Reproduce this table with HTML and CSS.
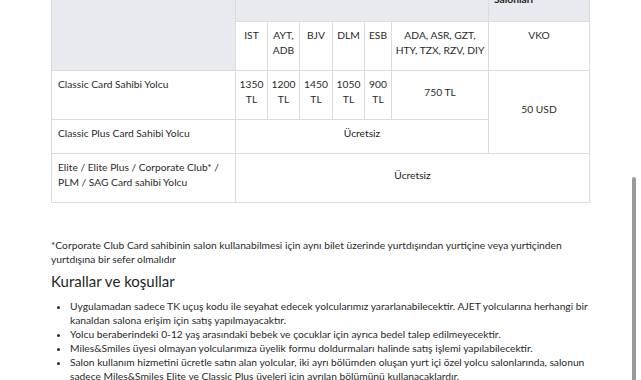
FILE: index.html
```html
<!DOCTYPE html>
<html lang="tr">
<head>
<meta charset="utf-8">
<title>Salon Kullanımı</title>
<link rel="stylesheet" href="styles.css">
</head>
<body>
<div class="viewport">
  <main class="content">
    <table class="lounge">
      <colgroup>
        <col class="c-type">
        <col class="c-32">
        <col class="c-32">
        <col class="c-33">
        <col class="c-32">
        <col class="c-27">
        <col class="c-97">
        <col class="c-101">
      </colgroup>
      <thead>
        <tr class="group-row">
          <th rowspan="2" class="corner"></th>
          <th colspan="6" class="group">Yurt İçi Salonları</th>
          <th class="group">Dış Hat<br>Salonları**</th>
        </tr>
        <tr class="sub-row">
          <th>IST</th>
          <th>AYT,<br>ADB</th>
          <th>BJV</th>
          <th>DLM</th>
          <th>ESB</th>
          <th>ADA, ASR, GZT,<br>HTY, TZX, RZV, DIY</th>
          <th>VKO</th>
        </tr>
      </thead>
      <tbody>
        <tr>
          <td class="type">Classic Card Sahibi Yolcu</td>
          <td class="val top">1350<br>TL</td>
          <td class="val top">1200<br>TL</td>
          <td class="val top">1450<br>TL</td>
          <td class="val top">1050<br>TL</td>
          <td class="val top">900<br>TL</td>
          <td class="val">750 TL</td>
          <td class="val" rowspan="2">50 USD</td>
        </tr>
        <tr>
          <td class="type">Classic Plus Card Sahibi Yolcu</td>
          <td class="val free" colspan="6">Ücretsiz</td>
        </tr>
        <tr>
          <td class="type">Elite / Elite Plus / Corporate Club* /<br>PLM / SAG Card sahibi Yolcu</td>
          <td class="val free" colspan="7">Ücretsiz</td>
        </tr>
      </tbody>
    </table>

    <p class="note">*Corporate Club Card sahibinin salon kullanabilmesi için aynı bilet üzerinde yurtdışından yurtiçine veya yurtiçinden yurtdışına bir sefer olmalıdır</p>

    <h2 class="title">Kurallar ve koşullar</h2>
    <ul class="rules">
      <li>Uygulamadan sadece TK uçuş kodu ile seyahat edecek yolcularımız yararlanabilecektir. AJET yolcularına herhangi bir kanaldan salona erişim için satış yapılmayacaktır.</li>
      <li>Yolcu beraberindeki 0-12 yaş arasındaki bebek ve çocuklar için ayrıca bedel talep edilmeyecektir.</li>
      <li>Miles&amp;Smiles üyesi olmayan yolcularımıza üyelik formu doldurmaları halinde satış işlemi yapılabilecektir.</li>
      <li>Salon kullanım hizmetini ücretle satın alan yolcular, iki ayrı bölümden oluşan yurt içi özel yolcu salonlarında, salonun sadece Miles&amp;Smiles Elite ve Classic Plus üyeleri için ayrılan bölümünü kullanacaklardır.</li>
    </ul>
  </main>
  <div class="scroll-thumb"></div>
</div>
</body>
</html>
```

FILE: styles.css
```css
html, body {
  margin: 0;
  padding: 0;
  background: #ffffff;
}

body {
  font-family: Lato, "Noto Sans", sans-serif;
  font-size: 10.25px;
  color: #2a2a2a;
}

.viewport {
  position: relative;
  width: 641px;
  height: 380px;
  overflow: hidden;
}

.content {
  width: 538px;
  margin: -30px 0 0 51px;
}

.lounge {
  width: 538px;
  border-collapse: collapse;
  table-layout: fixed;
  line-height: 15px;
}

.c-type { width: 184px; }
.c-32 { width: 32px; }
.c-33 { width: 33px; }
.c-27 { width: 27px; }
.c-97 { width: 97px; }
.c-101 { width: 101px; }

.lounge th,
.lounge td {
  border: 1px solid #dcdcdc;
  padding: 6px 2px 12px;
}

.group-row th {
  background: #e8eaef;
  color: #1c1c1c;
  font-weight: 700;
  text-align: left;
  vertical-align: top;
  padding: 6px 5px 14px;
}

.group-row th.group {
  border-top-color: #e8eaef;
}

.sub-row th {
  font-weight: 400;
  text-align: center;
  vertical-align: top;
  color: #2a2a2a;
}

.lounge td.type {
  text-align: left;
  vertical-align: top;
  padding-left: 6px;
}

.lounge td.val {
  text-align: center;
  vertical-align: middle;
}

.lounge td.val.top {
  vertical-align: top;
}

.lounge td.free {
  color: #222222;
}

.note {
  margin: 35px 0 0;
  line-height: 14px;
}

.title {
  margin: 5px 0 0;
  font-size: 15px;
  font-weight: 400;
  line-height: 20px;
  color: #1f1f1f;
}

.rules {
  margin: 8px 0 0;
  padding: 0 0 0 19px;
  line-height: 14px;
}

.rules li {
  margin: 0;
}

.scroll-thumb {
  position: absolute;
  left: 632px;
  top: 177px;
  width: 4px;
  bottom: 0;
  background: #9a9a9a;
  border-radius: 2px 2px 0 0;
}
```
